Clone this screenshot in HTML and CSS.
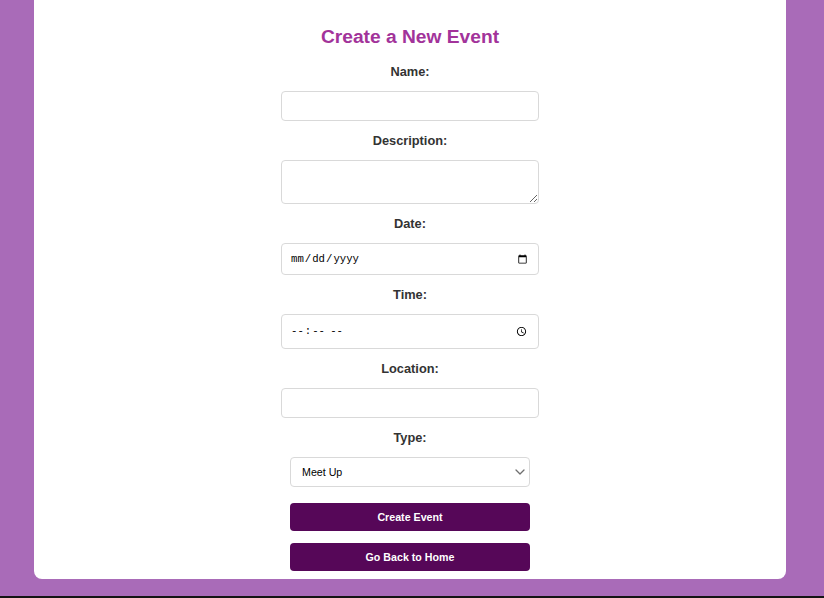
FILE: index.html
```html
<!DOCTYPE html>
<html lang="en">
<head>
<meta charset="utf-8">
<title>Create a New Event</title>
<link rel="stylesheet" href="styles.css">
</head>
<body>
<main class="card">
  <h2 class="title">Create a New Event</h2>
  <form class="form">
    <label class="label" for="name">Name:</label>
    <input class="field field-name" id="name" type="text">
    <label class="label" for="desc">Description:</label>
    <textarea class="field field-desc" id="desc"></textarea>
    <label class="label" for="date">Date:</label>
    <input class="field field-date" id="date" type="date">
    <label class="label" for="time">Time:</label>
    <input class="field field-time" id="time" type="time">
    <label class="label" for="loc">Location:</label>
    <input class="field field-name" id="loc" type="text">
    <label class="label" for="type">Type:</label>
    <div class="select-wrap">
      <select class="select" id="type">
        <option>Meet Up</option>
        <option>Conference</option>
        <option>Workshop</option>
      </select>
      <svg class="chevron" width="10" height="6" viewBox="0 0 10 6" aria-hidden="true">
        <path d="M1 1 L5 5 L9 1" fill="none" stroke="#6f6f6f" stroke-width="1.3" stroke-linecap="round" stroke-linejoin="round"/>
      </svg>
    </div>
    <button class="btn btn-first" type="button">Create Event</button>
    <button class="btn" type="button">Go Back to Home</button>
  </form>
</main>
</body>
</html>
```
FILE: styles.css
```css
html {
  background: #141414;
}
body {
  margin: 0;
  background: #a96bb8;
  padding: 0 38px 17px 34px;
  font-family: "Liberation Sans", Arial, sans-serif;
}
.card {
  background: #ffffff;
  border-radius: 0 0 8px 8px;
  padding: 26px 0 8px;
  display: flex;
  flex-direction: column;
  align-items: center;
}
.title {
  margin: 0 0 4px;
  font-size: 19.2px;
  line-height: 22px;
  font-weight: bold;
  color: #a2339a;
}
.form {
  display: flex;
  flex-direction: column;
  align-items: center;
}
.label {
  display: block;
  margin: 12px 0;
  font-size: 12.8px;
  line-height: 15px;
  font-weight: bold;
  color: #333333;
}
.field {
  box-sizing: border-box;
  width: 258px;
  border: 1px solid #d9d9d9;
  border-radius: 4px;
  padding: 6px 8px;
  background: #ffffff;
  font-family: "Liberation Sans", Arial, sans-serif;
  font-size: 10.67px;
  color: #000;
  margin: 0;
}
.field-name {
  height: 30px;
}
.field-desc {
  height: 44px;
  resize: vertical;
}
.field-date {
  height: 32px;
  font-family: "Liberation Mono", "DejaVu Sans Mono", monospace;
  font-size: 10.67px;
}
.field-time {
  height: 35px;
  font-family: "Liberation Mono", "DejaVu Sans Mono", monospace;
  font-size: 10.67px;
}
.select-wrap {
  position: relative;
  width: 240px;
  height: 30px;
}
.select {
  box-sizing: border-box;
  width: 240px;
  height: 30px;
  margin: 0;
  padding: 0 24px 0 11px;
  border: 1px solid #d9d9d9;
  border-radius: 4px;
  background: #ffffff;
  font-family: "Liberation Sans", Arial, sans-serif;
  font-size: 10.67px;
  color: #000;
  appearance: none;
  -webkit-appearance: none;
}
.chevron {
  position: absolute;
  right: 5px;
  top: 12px;
  pointer-events: none;
}
.btn {
  box-sizing: border-box;
  width: 240px;
  height: 28px;
  margin: 12px 0 0;
  border: none;
  border-radius: 4px;
  background: #560758;
  color: #ffffff;
  font-family: "Liberation Sans", Arial, sans-serif;
  font-size: 10.67px;
  font-weight: bold;
  cursor: pointer;
}
.btn-first {
  margin-top: 16px;
}
```
